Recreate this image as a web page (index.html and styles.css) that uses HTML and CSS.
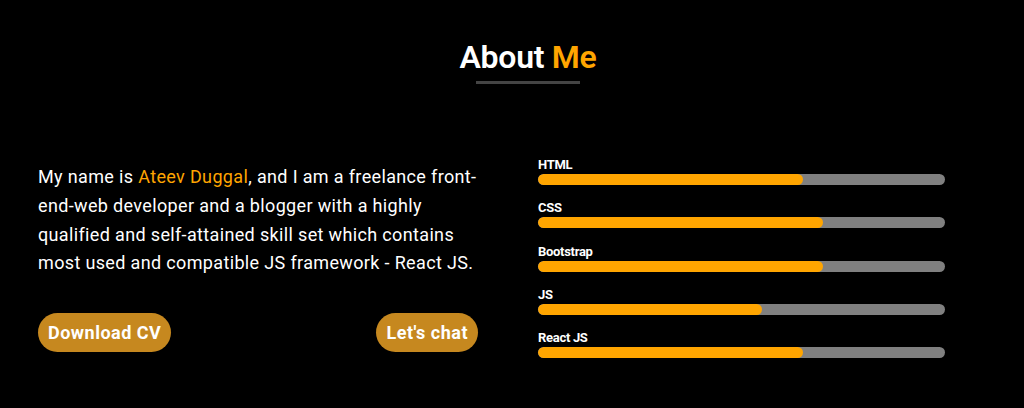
FILE: index.html
```html
<!DOCTYPE html>
<html lang="en">
<head>
<meta charset="utf-8">
<title>About Me</title>
<link rel="stylesheet" href="styles.css">
</head>
<body>
<section class="about">
  <h2 class="title">About <span class="accent">Me</span></h2>
  <div class="title-line"></div>
  <div class="content">
    <div class="intro">
      <p class="text">My name is <span class="accent">Ateev Duggal</span>, and I am a freelance front-end-web developer and a blogger with a highly qualified and self-attained skill set which contains most used and compatible JS framework - React JS.</p>
      <div class="actions">
        <a class="btn" href="#">Download CV</a>
        <a class="btn" href="#">Let's chat</a>
      </div>
    </div>
    <div class="skills">
      <div class="skill">
        <div class="skill-name">HTML</div>
        <div class="bar"><div class="fill" style="width:65%"></div></div>
      </div>
      <div class="skill">
        <div class="skill-name">CSS</div>
        <div class="bar"><div class="fill" style="width:70%"></div></div>
      </div>
      <div class="skill">
        <div class="skill-name">Bootstrap</div>
        <div class="bar"><div class="fill" style="width:70%"></div></div>
      </div>
      <div class="skill">
        <div class="skill-name">JS</div>
        <div class="bar"><div class="fill" style="width:55%"></div></div>
      </div>
      <div class="skill">
        <div class="skill-name">React JS</div>
        <div class="bar"><div class="fill" style="width:65%"></div></div>
      </div>
    </div>
  </div>
</section>
</body>
</html>
```
FILE: styles.css
```css
* { box-sizing: border-box; }
html, body {
  margin: 0;
  padding: 0;
  background: #000;
  color: #fff;
  font-family: Roboto, "Liberation Sans", Arial, sans-serif;
}
.about {
  width: 1024px;
  height: 408px;
  padding-top: 38px;
}
.title {
  margin: 0;
  padding-left: 32px;
  text-align: center;
  font-size: 32px;
  line-height: 38px;
  font-weight: 600;
  letter-spacing: -0.3px;
}
.accent { color: #ffa500; }
.title-line {
  width: 104px;
  height: 3px;
  background: #444;
  margin: 5px 0 0 476px;
}
.content {
  display: flex;
  align-items: center;
  gap: 60px;
  padding-left: 38px;
  margin-top: 73px;
}
.intro {
  width: 440px;
}
.text {
  width: 446px;
  margin: 0;
  font-size: 18px;
  line-height: 28.8px;
  letter-spacing: 0.35px;
  color: #fff;
}
.actions {
  display: flex;
  justify-content: space-between;
  margin-top: 35px;
}
.btn {
  display: inline-flex;
  align-items: center;
  height: 39px;
  padding: 0 10px;
  border-radius: 20px;
  background: #c6881f;
  color: #fff;
  text-decoration: none;
  font-size: 18px;
  font-weight: 700;
  letter-spacing: 0.5px;
}
.skills {
  width: 407px;
  display: flex;
  flex-direction: column;
  gap: 15.25px;
}
.skill-name {
  font-size: 13px;
  line-height: 16px;
  font-weight: 700;
  letter-spacing: -0.3px;
  margin-bottom: 1px;
}
.bar {
  height: 11px;
  background: #808080;
  border-radius: 6px;
  overflow: hidden;
}
.fill {
  height: 100%;
  background: #ffa500;
  border-radius: 6px;
}
```
